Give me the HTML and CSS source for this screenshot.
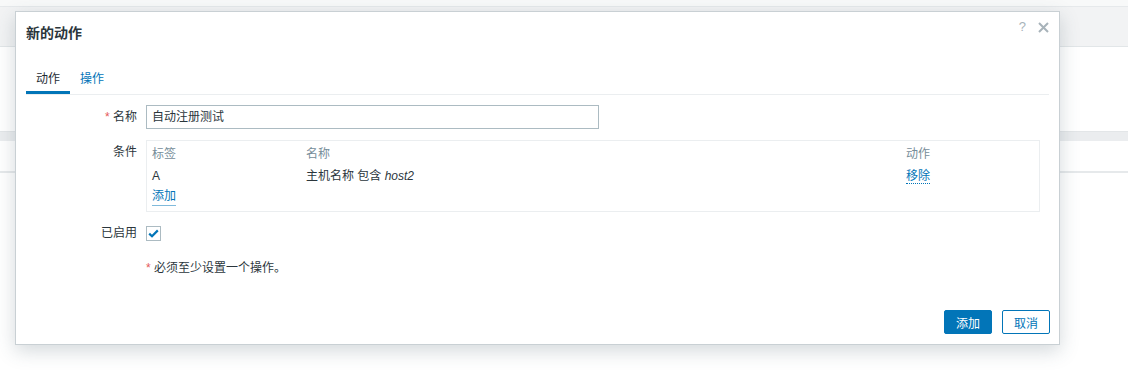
FILE: index.html
```html
<!doctype html>
<html lang="zh-CN">
<head>
	<meta charset="UTF-8">
	<title>新的动作</title>
	<link rel="stylesheet" href="styles.css">
</head>
<body>
	<div class="page">
		<div class="page-top"></div>
		<div class="page-header"></div>
		<div class="page-gap"></div>
		<div class="page-band"></div>
		<div class="page-row"></div>
	</div>

	<div class="overlay-dialogue">
		<div class="dialogue-head">
			<h4 class="dialogue-title">新的动作</h4>
			<div class="dialogue-tools">
				<span class="btn-help">?</span>
				<span class="btn-close">
					<svg width="11" height="11" viewBox="0 0 11 11"><path d="M1 1L10 10M10 1L1 10" stroke="#a8b3ba" stroke-width="2"/></svg>
				</span>
			</div>
		</div>

		<ul class="tabs">
			<li class="tab tab-active">动作</li>
			<li class="tab">操作</li>
		</ul>

		<div class="form-list">
			<div class="form-row">
				<label class="form-label"><span class="asterisk">*</span> 名称</label>
				<div class="form-field">
					<input type="text" class="text-input" value="自动注册测试">
				</div>
			</div>
			<div class="form-row form-row-cond">
				<label class="form-label">条件</label>
				<div class="form-field">
					<div class="cond-box">
						<table class="cond-table">
							<thead>
								<tr><th class="col-label">标签</th><th class="col-name">名称</th><th>动作</th></tr>
							</thead>
							<tbody>
								<tr><td>A</td><td>主机名称 包含 <i>host2</i></td><td><a class="link-dotted">移除</a></td></tr>
							</tbody>
						</table>
						<a class="link-add">添加</a>
					</div>
				</div>
			</div>
			<div class="form-row form-row-check">
				<label class="form-label">已启用</label>
				<div class="form-field">
					<span class="checkbox">
						<svg width="11" height="9" viewBox="0 0 11 9"><path d="M1.2 4.6L4 7.2L9.8 1.4" fill="none" stroke="#0275b8" stroke-width="2.2"/></svg>
					</span>
				</div>
			</div>
			<div class="form-row form-row-note">
				<label class="form-label"></label>
				<div class="form-field"><span class="asterisk">*</span> 必须至少设置一个操作。</div>
			</div>
		</div>

		<div class="dialogue-footer">
			<button class="btn btn-primary">添加</button>
			<button class="btn btn-alt">取消</button>
		</div>
	</div>
</body>
</html>
```

FILE: styles.css
```css
html,body{height:100%;}
body{margin:0;background:#fff;font-family:"Liberation Sans","Noto Sans CJK SC",sans-serif;font-size:12px;color:#1f2c33;overflow:hidden;}

.page-top{height:6px;background:#f8f9f9;}
.page-header{height:39px;background:#f2f3f4;border-top:1px solid #e6e9eb;border-bottom:1px solid #e2e6e8;}
.page-gap{height:84px;}
.page-band{height:9px;background:#ebedef;border-top:1px solid #e3e6e8;}
.page-row{height:30px;border-bottom:2px solid #e6e9eb;}

.overlay-dialogue{position:absolute;left:15px;top:11px;width:1043px;height:332px;background:#fff;border:1px solid #c9d0d4;box-shadow:0 6px 18px rgba(60,80,95,.22);display:flex;flex-direction:column;}

.dialogue-head{display:flex;justify-content:space-between;padding:11px 10px 0 10px;height:31px;}
.dialogue-title{margin:0;font-size:14px;font-weight:bold;line-height:18px;padding-top:1px;color:#2b363c;}
.dialogue-tools{display:flex;gap:12px;margin-top:-4px;}
.btn-help{color:#a8b3ba;font-size:13px;line-height:16px;}
.btn-close{padding-top:3px;}

.tabs{list-style:none;margin:13px 10px 0 10px;padding:0;display:flex;border-bottom:1px solid #ebeef0;height:27px;}
.tab{padding:0 10px;line-height:24px;color:#0275b8;}
.tab-active{color:#1f2c33;border-bottom:3px solid #0275b8;height:24px;}

.form-list{padding-top:10px;}
.form-row{display:flex;align-items:flex-start;margin-bottom:11px;}
.form-label{width:121px;text-align:right;padding-right:9px;line-height:24px;color:#2b363c;}
.form-field{flex:1;line-height:24px;}
.asterisk{color:#e45959;}

.text-input{width:453px;height:24px;box-sizing:border-box;border:1px solid #acbbc2;padding:0 5px;font:inherit;color:#2b363c;}

.cond-box{width:894px;height:72px;box-sizing:border-box;border:1px solid #ebeef0;padding:3px 5px 0 5px;}
.cond-table{border-collapse:collapse;width:100%;}
.cond-table th{text-align:left;font-weight:normal;color:#768d99;line-height:20px;padding:0;}
.cond-table td{line-height:22px;padding:1px 0 0 0;color:#2b363c;}
.col-label{width:154px;}
.col-name{width:600px;}
.link-dotted{color:#0275b8;border-bottom:1px dotted #0275b8;}
.link-add{color:#0275b8;border-bottom:1px solid rgba(2,117,184,.5);line-height:18px;display:block;width:fit-content;}

.form-row-cond{margin-bottom:9px;}
.form-row-check{margin-bottom:13px;}
.checkbox{display:inline-flex;align-items:center;justify-content:center;width:13px;height:13px;border:1px solid #acbbc2;margin-top:5px;vertical-align:top;}
.form-row-note .form-field{line-height:20px;color:#2b363c;}

.dialogue-footer{margin-top:auto;display:flex;justify-content:flex-end;gap:10px;padding:0 9px 10px 0;}
.btn{height:24px;box-sizing:border-box;padding:0 11px;font:inherit;border-radius:2px;cursor:pointer;}
.btn-primary{background:#0275b8;border:1px solid #0275b8;color:#fff;width:48px;}
.btn-alt{background:#fff;border:1px solid #0275b8;color:#0275b8;width:48px;}
```
